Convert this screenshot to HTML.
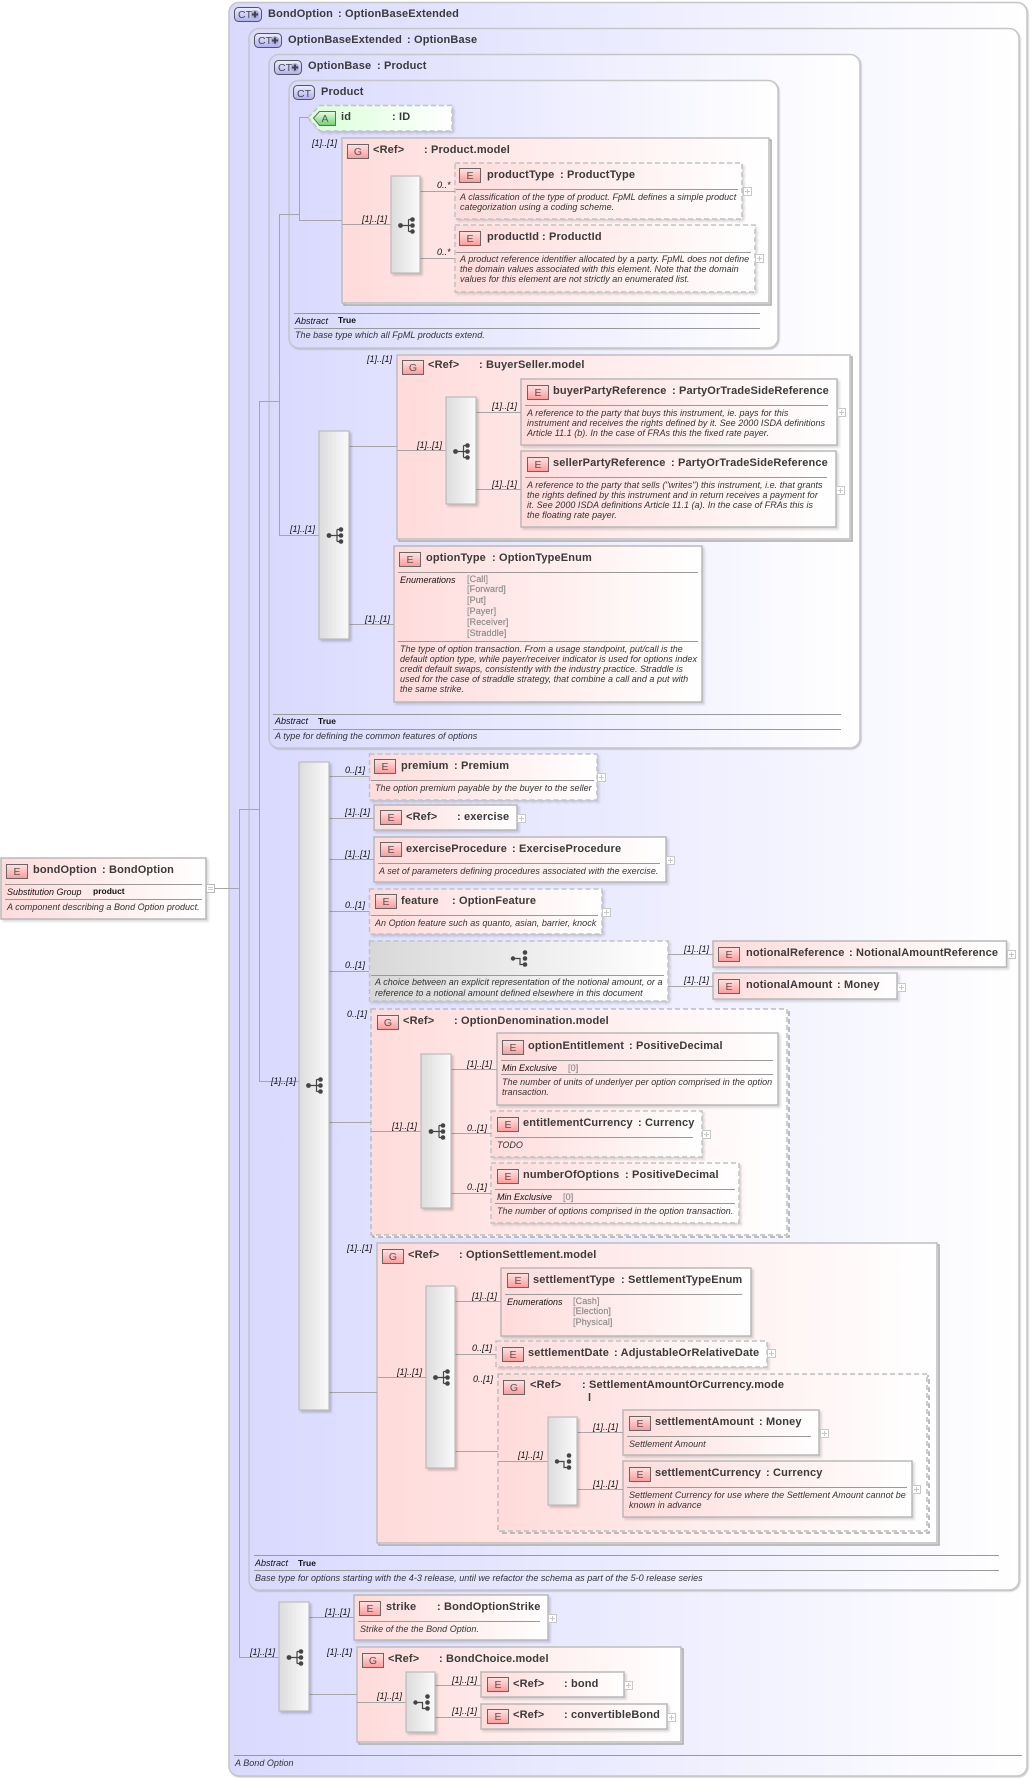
<!DOCTYPE html>
<html><head><meta charset="utf-8"><title>bondOption</title>
<style>
html,body{margin:0;padding:0;background:#fff}
svg{display:block;filter:blur(.35px)}
text{font-family:"Liberation Sans",Arial,sans-serif;white-space:pre}
.t{font-size:11px;font-weight:bold;fill:#3a3a3a;letter-spacing:.15px}
.d{font-size:9px;font-style:italic;fill:#333;letter-spacing:.03px}
.k{font-size:9px;font-style:italic;fill:#111}
.l{font-size:9px;font-style:italic;fill:#111}
.b{font-size:8.5px;font-weight:bold;fill:#111}
.v{font-size:9px;fill:#888;stroke:#999;stroke-width:.2;letter-spacing:.1px}
.i{font-size:10.5px;fill:#555;text-anchor:middle}
.ct{font-size:10.5px;fill:#445}
.c{stroke:#c6c6c6;stroke-width:1.5;filter:drop-shadow(1.5px 1.5px .5px rgba(0,0,0,.18))}
.e{fill:url(#r);stroke:#b8b8b8;stroke-width:1.5;filter:drop-shadow(2px 2px 1px rgba(0,0,0,.14))}
.n{stroke-dasharray:5 3;stroke:#c2c2c2}
.g{fill:url(#r);stroke:#bdbdbd;stroke-width:1.5}
.gb{fill:#f6f6f6;stroke:#aaa;stroke-width:1.5}
.s{fill:url(#q);stroke:#bbb;stroke-width:1.2;filter:drop-shadow(2px 2px 1px rgba(0,0,0,.18))}
.h{stroke:#999;stroke-width:1;fill:none}
.w{stroke:#a6a6a6;stroke-width:1;fill:none}
</style></head><body>
<svg xmlns="http://www.w3.org/2000/svg" width="1032" height="1778" viewBox="0 0 1032 1778">
<defs>
<linearGradient id="b"><stop offset="0" stop-color="#d9d9ff"/><stop offset="1" stop-color="#fff"/></linearGradient>
<linearGradient id="r"><stop offset="0" stop-color="#ffdbdb"/><stop offset="1" stop-color="#fff"/></linearGradient>
<linearGradient id="gr"><stop offset="0" stop-color="#d8ffd8"/><stop offset="1" stop-color="#fff"/></linearGradient>
<linearGradient id="q"><stop offset="0" stop-color="#dcdcdc"/><stop offset="1" stop-color="#fafafa"/></linearGradient>
<linearGradient id="qq"><stop offset="0" stop-color="#d8d8d8"/><stop offset="1" stop-color="#fff"/></linearGradient>
<linearGradient id="ie" x1="0" y1="0" x2="0" y2="1"><stop offset="0" stop-color="#ffe4e4"/><stop offset="1" stop-color="#f99"/></linearGradient>
<linearGradient id="ic" x1="0" y1="0" x2="0" y2="1"><stop offset="0" stop-color="#eeeeff"/><stop offset="1" stop-color="#b0b0ee"/></linearGradient>
<linearGradient id="ia" x1="0" y1="0" x2="0" y2="1"><stop offset="0" stop-color="#e8ffe8"/><stop offset="1" stop-color="#70d070"/></linearGradient>
<rect id="E" width="21" height="14" fill="url(#ie)" stroke="#666" stroke-width="1"/>
<g id="t"><path d="M-6 0H2M2-6V6M2-6H6M2 0H6M2 6H6" stroke="#444" stroke-width="1.2" fill="none"/><g fill="#444"><circle cx="-6" r="2.4"/><circle cx="6" cy="-6" r="2.3"/><circle cx="6" r="2.3"/><circle cx="6" cy="6" r="2.3"/></g></g>
<g id="u"><path d="M-6 0H1V6H6" stroke="#444" stroke-width="1.2" fill="none"/><g fill="#444"><circle cx="-6" r="2.2"/><circle cx="6" cy="-6" r="2.3"/><circle cx="6" r="2.3"/><circle cx="6" cy="6" r="2.3"/></g></g>
<g id="p"><rect x=".5" y=".5" width="8" height="8" fill="#fff" stroke="#c8c8c8"/><path d="M2 4.5H7M4.500 2V7" stroke="#c8c8c8"/></g>
<g id="m"><rect x=".5" y=".5" width="8" height="8" fill="#fff" stroke="#bbb"/><path d="M2 3.5H7M2 5.500H7" stroke="#ccc"/></g>
<g id="cp"><rect x=".5" y=".5" width="27" height="14" rx="4" fill="url(#ic)" stroke="#555"/><circle cx="21" cy="7.5" r="4.2" fill="#a8a8e0"/><path d="M21 4.500V10.500M18 7.500H24" stroke="#444" stroke-width="2"/></g>
</defs>

<!-- complex type frames -->
<rect class="c" x="229" y="2.5" width="798" height="1773.5" rx="10" fill="url(#b)"/>
<rect class="c" x="249" y="28.5" width="770" height="1561.5" rx="10" fill="url(#b)"/>
<rect class="c" x="269" y="54.5" width="591" height="693.5" rx="10" fill="url(#b)"/>
<rect class="c" x="289" y="80.5" width="489" height="267.5" rx="10" fill="url(#b)"/>

<!-- attribute -->
<path d="M308 117.500L320 105.500H452V131H320Z" fill="url(#gr)" stroke="#c2c2c2" stroke-width="1.5" stroke-dasharray="5 3" style="filter:drop-shadow(2px 2px 1px rgba(0,0,0,.14))"/>

<!-- group boxes and elements -->
<rect class="gb" x="344" y="140" width="427" height="165"/><rect class="g" x="342" y="138" width="427" height="165"/>
<rect class="e n" x="455" y="163" width="287" height="56"/>
<rect class="e n" x="455" y="225" width="300" height="67"/>

<rect class="gb" x="399" y="357" width="453" height="184"/><rect class="g" x="397" y="355" width="453" height="184"/>
<rect class="e" x="521" y="379" width="316" height="66"/>
<rect class="e" x="521" y="451" width="315" height="76"/>
<rect class="e" x="394" y="546" width="308" height="156"/>

<rect class="e n" x="369.5" y="754" width="227.5" height="46"/>
<rect class="e" x="374" y="805" width="143" height="25"/>
<rect class="e" x="374" y="837" width="292" height="45"/>
<rect class="e n" x="369.5" y="889" width="232.5" height="45"/>
<rect class="e n" x="369.5" y="941" width="298.5" height="60" style="fill:url(#qq)"/>
<rect class="e" x="713" y="941" width="293.500" height="26"/>
<rect class="e" x="713" y="973" width="184" height="26"/>

<rect class="gb n" x="373" y="1011" width="416" height="226"/><rect class="g n" x="371" y="1009" width="416" height="226"/>
<rect class="e" x="497" y="1033" width="281" height="72"/>
<rect class="e n" x="491" y="1111" width="211" height="46"/>
<rect class="e n" x="491" y="1163" width="248" height="60"/>

<rect class="gb" x="379" y="1245" width="560" height="300"/><rect class="g" x="377" y="1243" width="560" height="300"/>
<rect class="e" x="501" y="1268" width="250" height="68"/>
<rect class="e n" x="496" y="1341" width="271" height="26"/>
<rect class="gb n" x="500" y="1376" width="429" height="157" style="fill:none"/><rect class="g n" x="498" y="1374" width="429" height="157"/>
<rect class="e" x="623" y="1410" width="196" height="45"/>
<rect class="e" x="623" y="1461" width="289" height="56"/>

<rect class="e" x="354" y="1595" width="194" height="45"/>
<rect class="gb" x="359" y="1649" width="324" height="95"/><rect class="g" x="357" y="1647" width="324" height="95"/>
<rect class="e" x="481" y="1672" width="143" height="25"/>
<rect class="e" x="481" y="1704" width="186" height="25"/>
<rect class="e" x="1" y="858" width="205" height="61"/>

<!-- connectors -->
<path class="w" d="M215 888.500H239.500M239.500 809V1657.500H279M239.500 809.500H259.500M259.500 401V1081.500H299M259.500 401.500H279.500M279.500 214V535.500H319M279.500 214.500H299.500M299.500 117V220.500H342M299.500 117.500H308M342 224.500H391M420 191.500H455M420 258.500H455M349 446.500H397M397 450.500H446M476 412.500H521M476 489.500H521M349 624.500H394M329 776.500H369M329 818.500H374M329 859.500H374M329 911.500H369M329 971.500H369M329 1122.500H371M329 1392.500H377M668 954.500H713M668 986.500H713M371 1131.500H421M451 1069.500H497M451 1133.500H491M451 1193.500H491M377 1377.500H426M455 1301.500H501M455 1354.500H496M455 1451.500H498M498 1461.500H548M577 1432.500H623M577 1489.500H623M309 1617.500H354M309 1694.500H357M357 1702.500H406M435 1685.500H481M435 1717.500H481"/>

<!-- divider lines -->
<path class="h" d="M456 189.500H738M456 252.500H751M525 405.500H828M525 477.500H827M398 572.500H698M398 641.500H698M294 313.500H760M294 328.500H760M273 714.500H841M273 729.500H841M5 884.500H202M5 899.500H202M371 780.500H594M378 863.500H660M371 915.500H598M371 975.500H664M501 1060.500H773M501 1074.500H773M495 1137.500H693M495 1189.500H735M495 1203.500H735M505 1294.500H742M627 1436.500H811M627 1487.500H907M254 1555.500H999M254 1570.500H999M358 1621.500H540M234 1755.500H1022"/>

<!-- sequence boxes -->
<rect class="s" x="391" y="176" width="29" height="97"/>
<rect class="s" x="319" y="431" width="30" height="208"/>
<rect class="s" x="446" y="397" width="30" height="107"/>
<rect class="s" x="299" y="762" width="30" height="648"/>
<rect class="s" x="421" y="1054" width="30" height="154"/>
<rect class="s" x="426" y="1286" width="29" height="182"/>
<rect class="s" x="548" y="1417" width="29" height="88"/>
<rect class="s" x="279" y="1602" width="30" height="109"/>
<rect class="s" x="406" y="1672" width="29" height="60"/>
<use href="#t" x="406.500" y="225.500"/>
<use href="#t" x="335" y="535.500"/>
<use href="#t" x="461.500" y="451.500"/>
<use href="#t" x="314.500" y="1085.500"/>
<use href="#t" x="437" y="1131.500"/>
<use href="#t" x="441.500" y="1377.500"/>
<use href="#u" x="563" y="1461.500"/>
<use href="#t" x="295" y="1657.500"/>
<use href="#u" x="421.500" y="1702.500"/>
<use href="#u" x="519" y="958.500"/>

<!-- plus boxes -->
<use href="#p" x="743" y="187"/><use href="#p" x="755" y="254"/><use href="#p" x="837" y="408"/><use href="#p" x="836" y="486"/>
<use href="#p" x="597" y="773"/><use href="#p" x="517" y="814"/><use href="#p" x="666" y="856"/><use href="#p" x="602" y="908"/>
<use href="#p" x="1007" y="950"/><use href="#p" x="897" y="983"/><use href="#p" x="702" y="1130"/><use href="#p" x="767" y="1349"/>
<use href="#p" x="820" y="1429"/><use href="#p" x="912" y="1485"/><use href="#p" x="548" y="1614"/><use href="#p" x="624" y="1681"/><use href="#p" x="667" y="1713"/>
<use href="#m" x="206" y="884"/>

<!-- CT headers -->
<use href="#cp" x="234" y="7"/><text class="ct" x="238" y="18">CT</text>
<text class="t" x="268" y="17">BondOption</text><text class="t" x="338" y="17">: OptionBaseExtended</text>
<use href="#cp" x="254" y="33"/><text class="ct" x="258" y="44">CT</text>
<text class="t" x="288" y="43">OptionBaseExtended</text><text class="t" x="407" y="43">: OptionBase</text>
<use href="#cp" x="274" y="60"/><text class="ct" x="278" y="71">CT</text>
<text class="t" x="308" y="69">OptionBase</text><text class="t" x="377" y="69">: Product</text>
<rect x="293.500" y="85.500" width="21" height="14" rx="4" fill="url(#ic)" stroke="#555"/><text class="ct" x="297" y="97">CT</text>
<text class="t" x="321" y="95">Product</text>

<!-- attribute icon -->
<path d="M313.500 118L319.500 111.500H335.500V125.500H319.500Z" fill="url(#ia)" stroke="#666"/>
<text class="i" x="325" y="122">A</text>
<text class="t" x="341" y="120">id</text><text class="t" x="392" y="120">: ID</text>

<!-- Product.model -->
<text class="l" x="312" y="146">[1]..[1]</text>
<use href="#E" x="347.500" y="144.500"/><text class="i" x="358" y="155">G</text>
<text class="t" x="373" y="153">&lt;Ref&gt;</text><text class="t" x="424" y="153">: Product.model</text>
<text class="l" x="362" y="222">[1]..[1]</text>
<text class="l" x="437" y="188">0..*</text><text class="l" x="437" y="255">0..*</text>
<use href="#E" x="459.500" y="168.500"/><text class="i" x="470" y="179">E</text>
<text class="t" x="487" y="178">productType</text><text class="t" x="560" y="178">: ProductType</text>
<text class="d" x="460" y="200">A classification of the type of product. FpML defines a simple product</text>
<text class="d" x="460" y="210">categorization using a coding scheme.</text>
<use href="#E" x="459.500" y="231.500"/><text class="i" x="470" y="242">E</text>
<text class="t" x="487" y="240">productId</text><text class="t" x="542" y="240">: ProductId</text>
<text class="d" x="460" y="262">A product reference identifier allocated by a party. FpML does not define</text>
<text class="d" x="460" y="272">the domain values associated with this element. Note that the domain</text>
<text class="d" x="460" y="282">values for this element are not strictly an enumerated list.</text>
<text class="k" x="295" y="324">Abstract</text><text class="b" x="338" y="323">True</text>
<text class="d" x="295" y="338">The base type which all FpML products extend.</text>

<!-- BuyerSeller.model -->
<text class="l" x="367" y="362">[1]..[1]</text>
<use href="#E" x="402.500" y="360.500"/><text class="i" x="413" y="371">G</text>
<text class="t" x="428" y="368">&lt;Ref&gt;</text><text class="t" x="479" y="368">: BuyerSeller.model</text>
<text class="l" x="290" y="532">[1]..[1]</text>
<text class="l" x="417" y="448">[1]..[1]</text>
<text class="l" x="492" y="409">[1]..[1]</text><text class="l" x="492" y="487">[1]..[1]</text>
<use href="#E" x="527.500" y="385.500"/><text class="i" x="538" y="396">E</text>
<text class="t" x="553" y="394">buyerPartyReference</text><text class="t" x="672" y="394">: PartyOrTradeSideReference</text>
<text class="d" x="527" y="416">A reference to the party that buys this instrument, ie. pays for this</text>
<text class="d" x="527" y="426">instrument and receives the rights defined by it. See 2000 ISDA definitions</text>
<text class="d" x="527" y="436">Article 11.1 (b). In the case of FRAs this the fixed rate payer.</text>
<use href="#E" x="527.500" y="457.500"/><text class="i" x="538" y="468">E</text>
<text class="t" x="553" y="466">sellerPartyReference</text><text class="t" x="671" y="466">: PartyOrTradeSideReference</text>
<text class="d" x="527" y="488">A reference to the party that sells ("writes") this instrument, i.e. that grants</text>
<text class="d" x="527" y="498">the rights defined by this instrument and in return receives a payment for</text>
<text class="d" x="527" y="508">it. See 2000 ISDA definitions Article 11.1 (a). In the case of FRAs this is</text>
<text class="d" x="527" y="518">the floating rate payer.</text>

<!-- optionType -->
<text class="l" x="365" y="622">[1]..[1]</text>
<use href="#E" x="399.500" y="552.500"/><text class="i" x="410" y="563">E</text>
<text class="t" x="426" y="561">optionType</text><text class="t" x="492" y="561">: OptionTypeEnum</text>
<text class="k" x="400" y="583">Enumerations</text>
<text class="v" x="467" y="582">[Call]</text><text class="v" x="467" y="592">[Forward]</text><text class="v" x="467" y="603">[Put]</text><text class="v" x="467" y="614">[Payer]</text><text class="v" x="467" y="625">[Receiver]</text><text class="v" x="467" y="636">[Straddle]</text>
<text class="d" x="400" y="652">The type of option transaction. From a usage standpoint, put/call is the</text>
<text class="d" x="400" y="662">default option type, while payer/receiver indicator is used for options index</text>
<text class="d" x="400" y="672">credit default swaps, consistently with the industry practice. Straddle is</text>
<text class="d" x="400" y="682">used for the case of straddle strategy, that combine a call and a put with</text>
<text class="d" x="400" y="692">the same strike.</text>
<text class="k" x="275" y="724">Abstract</text><text class="b" x="318" y="724">True</text>
<text class="d" x="275" y="739">A type for defining the common features of options</text>

<!-- bondOption -->
<use href="#E" x="6.500" y="864.500"/><text class="i" x="17" y="875">E</text>
<text class="t" x="33" y="873">bondOption</text><text class="t" x="102" y="873">: BondOption</text>
<text class="k" x="7" y="895">Substitution Group</text><text class="b" x="93" y="894">product</text>
<text class="d" x="7" y="910">A component describing a Bond Option product.</text>

<!-- main list -->
<text class="l" x="271" y="1084">[1]..[1]</text>
<text class="l" x="345" y="773">0..[1]</text><text class="l" x="345" y="815">[1]..[1]</text><text class="l" x="345" y="857">[1]..[1]</text><text class="l" x="345" y="908">0..[1]</text><text class="l" x="345" y="968">0..[1]</text>
<use href="#E" x="374.500" y="759.500"/><text class="i" x="385" y="770">E</text>
<text class="t" x="401" y="769">premium</text><text class="t" x="454" y="769">: Premium</text>
<text class="d" x="375" y="791">The option premium payable by the buyer to the seller</text>
<use href="#E" x="380.500" y="810.500"/><text class="i" x="391" y="821">E</text>
<text class="t" x="406" y="820">&lt;Ref&gt;</text><text class="t" x="457" y="820">: exercise</text>
<use href="#E" x="380.500" y="842.500"/><text class="i" x="391" y="853">E</text>
<text class="t" x="406" y="852">exerciseProcedure</text><text class="t" x="512" y="852">: ExerciseProcedure</text>
<text class="d" x="379" y="874">A set of parameters defining procedures associated with the exercise.</text>
<use href="#E" x="375.500" y="894.500"/><text class="i" x="386" y="905">E</text>
<text class="t" x="401" y="904">feature</text><text class="t" x="452" y="904">: OptionFeature</text>
<text class="d" x="375" y="926">An Option feature such as quanto, asian, barrier, knock</text>
<text class="d" x="375" y="985">A choice between an explicit representation of the notional amount, or a</text>
<text class="d" x="375" y="996">reference to a notional amount defined elsewhere in this document</text>
<text class="l" x="684" y="952">[1]..[1]</text><text class="l" x="684" y="983">[1]..[1]</text>
<use href="#E" x="718.500" y="947.500"/><text class="i" x="729" y="958">E</text>
<text class="t" x="746" y="956">notionalReference</text><text class="t" x="849" y="956">: NotionalAmountReference</text>
<use href="#E" x="718.500" y="979.500"/><text class="i" x="729" y="990">E</text>
<text class="t" x="746" y="988">notionalAmount</text><text class="t" x="837" y="988">: Money</text>

<!-- OptionDenomination.model -->
<text class="l" x="347" y="1017">0..[1]</text>
<use href="#E" x="377.500" y="1015.500"/><text class="i" x="388" y="1026">G</text>
<text class="t" x="403" y="1024">&lt;Ref&gt;</text><text class="t" x="454" y="1024">: OptionDenomination.model</text>
<text class="l" x="392" y="1129">[1]..[1]</text>
<text class="l" x="467" y="1067">[1]..[1]</text><text class="l" x="467" y="1131">0..[1]</text><text class="l" x="467" y="1190">0..[1]</text>
<use href="#E" x="502.500" y="1040.500"/><text class="i" x="513" y="1051">E</text>
<text class="t" x="528" y="1049">optionEntitlement</text><text class="t" x="629" y="1049">: PositiveDecimal</text>
<text class="k" x="502" y="1071">Min Exclusive</text><text class="v" x="568" y="1071">[0]</text>
<text class="d" x="502" y="1085">The number of units of underlyer per option comprised in the option</text>
<text class="d" x="502" y="1095">transaction.</text>
<use href="#E" x="497.500" y="1117.500"/><text class="i" x="508" y="1128">E</text>
<text class="t" x="523" y="1126">entitlementCurrency</text><text class="t" x="638" y="1126">: Currency</text>
<text class="d" x="497" y="1148">TODO</text>
<use href="#E" x="497.500" y="1169.500"/><text class="i" x="508" y="1180">E</text>
<text class="t" x="523" y="1178">numberOfOptions</text><text class="t" x="625" y="1178">: PositiveDecimal</text>
<text class="k" x="497" y="1200">Min Exclusive</text><text class="v" x="563" y="1200">[0]</text>
<text class="d" x="497" y="1214">The number of options comprised in the option transaction.</text>

<!-- OptionSettlement.model -->
<text class="l" x="347" y="1251">[1]..[1]</text>
<use href="#E" x="382.500" y="1249.500"/><text class="i" x="393" y="1260">G</text>
<text class="t" x="408" y="1258">&lt;Ref&gt;</text><text class="t" x="459" y="1258">: OptionSettlement.model</text>
<text class="l" x="397" y="1375">[1]..[1]</text>
<text class="l" x="472" y="1299">[1]..[1]</text><text class="l" x="472" y="1351">0..[1]</text><text class="l" x="473" y="1382">0..[1]</text>
<use href="#E" x="507.500" y="1273.500"/><text class="i" x="518" y="1284">E</text>
<text class="t" x="533" y="1283">settlementType</text><text class="t" x="621" y="1283">: SettlementTypeEnum</text>
<text class="k" x="507" y="1305">Enumerations</text>
<text class="v" x="573" y="1304">[Cash]</text><text class="v" x="573" y="1314">[Election]</text><text class="v" x="573" y="1325">[Physical]</text>
<use href="#E" x="502.500" y="1347.500"/><text class="i" x="513" y="1358">E</text>
<text class="t" x="528" y="1356">settlementDate</text><text class="t" x="614" y="1356">: AdjustableOrRelativeDate</text>
<use href="#E" x="503.500" y="1380.500"/><text class="i" x="514" y="1391">G</text>
<text class="t" x="530" y="1388">&lt;Ref&gt;</text><text class="t" x="582" y="1388">: SettlementAmountOrCurrency.mode</text>
<text class="t" x="588" y="1401">l</text>
<text class="l" x="518" y="1458">[1]..[1]</text>
<text class="l" x="593" y="1430">[1]..[1]</text><text class="l" x="593" y="1487">[1]..[1]</text>
<use href="#E" x="629.500" y="1416.500"/><text class="i" x="640" y="1427">E</text>
<text class="t" x="655" y="1425">settlementAmount</text><text class="t" x="759" y="1425">: Money</text>
<text class="d" x="629" y="1447">Settlement Amount</text>
<use href="#E" x="629.500" y="1467.500"/><text class="i" x="640" y="1478">E</text>
<text class="t" x="655" y="1476">settlementCurrency</text><text class="t" x="766" y="1476">: Currency</text>
<text class="d" x="629" y="1498">Settlement Currency for use where the Settlement Amount cannot be</text>
<text class="d" x="629" y="1508">known in advance</text>
<text class="k" x="255" y="1566">Abstract</text><text class="b" x="298" y="1566">True</text>
<text class="d" x="255" y="1581">Base type for options starting with the 4-3 release, until we refactor the schema as part of the 5-0 release series</text>

<!-- bottom -->
<text class="l" x="250" y="1655">[1]..[1]</text>
<text class="l" x="325" y="1615">[1]..[1]</text>
<use href="#E" x="359.500" y="1601.500"/><text class="i" x="370" y="1612">E</text>
<text class="t" x="386" y="1610">strike</text><text class="t" x="437" y="1610">: BondOptionStrike</text>
<text class="d" x="360" y="1632">Strike of the the Bond Option.</text>
<text class="l" x="327" y="1655">[1]..[1]</text>
<use href="#E" x="362.500" y="1653.500"/><text class="i" x="373" y="1664">G</text>
<text class="t" x="388" y="1662">&lt;Ref&gt;</text><text class="t" x="439" y="1662">: BondChoice.model</text>
<text class="l" x="377" y="1699">[1]..[1]</text>
<text class="l" x="452" y="1683">[1]..[1]</text><text class="l" x="452" y="1714">[1]..[1]</text>
<use href="#E" x="487.500" y="1677.500"/><text class="i" x="498" y="1688">E</text>
<text class="t" x="513" y="1687">&lt;Ref&gt;</text><text class="t" x="564" y="1687">: bond</text>
<use href="#E" x="487.500" y="1709.500"/><text class="i" x="498" y="1720">E</text>
<text class="t" x="513" y="1718">&lt;Ref&gt;</text><text class="t" x="564" y="1718">: convertibleBond</text>
<text class="d" x="235" y="1766">A Bond Option</text>
</svg>
</body></html>
